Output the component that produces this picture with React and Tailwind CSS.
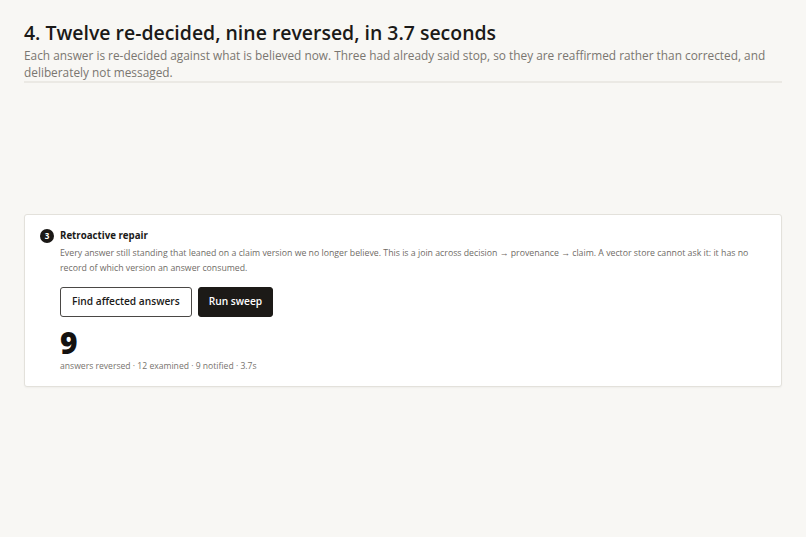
export default function App() {
  return (
    <div
      className="min-h-screen w-full bg-[#f8f7f4] px-6 pt-[19px]"
      style={{ fontFamily: '"Open Sans", "Noto Sans", sans-serif' }}
    >
      <h1 className="text-[19.45px] font-semibold leading-[28px] text-[#1b1a18]">
        4. Twelve re-decided, nine reversed, in 3.7 seconds
      </h1>
      <p className="text-[11.85px] leading-[17px] text-[#7a7670]">
        Each answer is re-decided against what is believed now. Three had already said stop, so they are reaffirmed rather than corrected, and deliberately not messaged.
      </p>
      <div className="h-[2px] bg-[#ebe9e4]" />

      <div className="mt-[131px] rounded-[3px] border border-[#e3e1db] bg-white pl-[15px] pr-4 pt-[14px] pb-[14px] shadow-[0_1px_2px_rgba(0,0,0,0.04)]">
        <div className="flex gap-[6px]">
          <div className="flex h-[14px] w-[14px] shrink-0 items-center justify-center rounded-full bg-[#1a1816] text-[8px] font-bold leading-none text-white">
            3
          </div>
          <div className="flex min-w-0 flex-1 flex-col">
            <div className="text-[9.7px] font-bold leading-[14px] text-[#1b1a18]">
              Retroactive repair
            </div>
            <p className="mt-[3px] text-[8.75px] leading-[15px] text-[#6f6b66]">
              Every answer still standing that leaned on a claim version we no longer believe. This is a join across decision → provenance → claim. A vector store cannot ask it: it has no record of which version an answer consumed.
            </p>
            <div className="mt-[11px] flex gap-[6px]">
              <button className="h-[30px] rounded-[3px] border border-[#4a4845] bg-white px-[11px] text-[10.2px] font-semibold text-[#1b1a18]">
                Find affected answers
              </button>
              <button className="h-[30px] rounded-[3px] border border-[#1c1a17] bg-[#1c1a17] px-[10px] text-[10.2px] font-semibold text-white">
                Run sweep
              </button>
            </div>
            <div className="mt-[11px] text-[30px] font-extrabold leading-[30px] text-[#141210]">
              9
            </div>
            <div className="mt-[2px] text-[8.6px] leading-[12px] text-[#77736d]">
              answers reversed · 12 examined · 9 notified · 3.7s
            </div>
          </div>
        </div>
      </div>
    </div>
  );
}
